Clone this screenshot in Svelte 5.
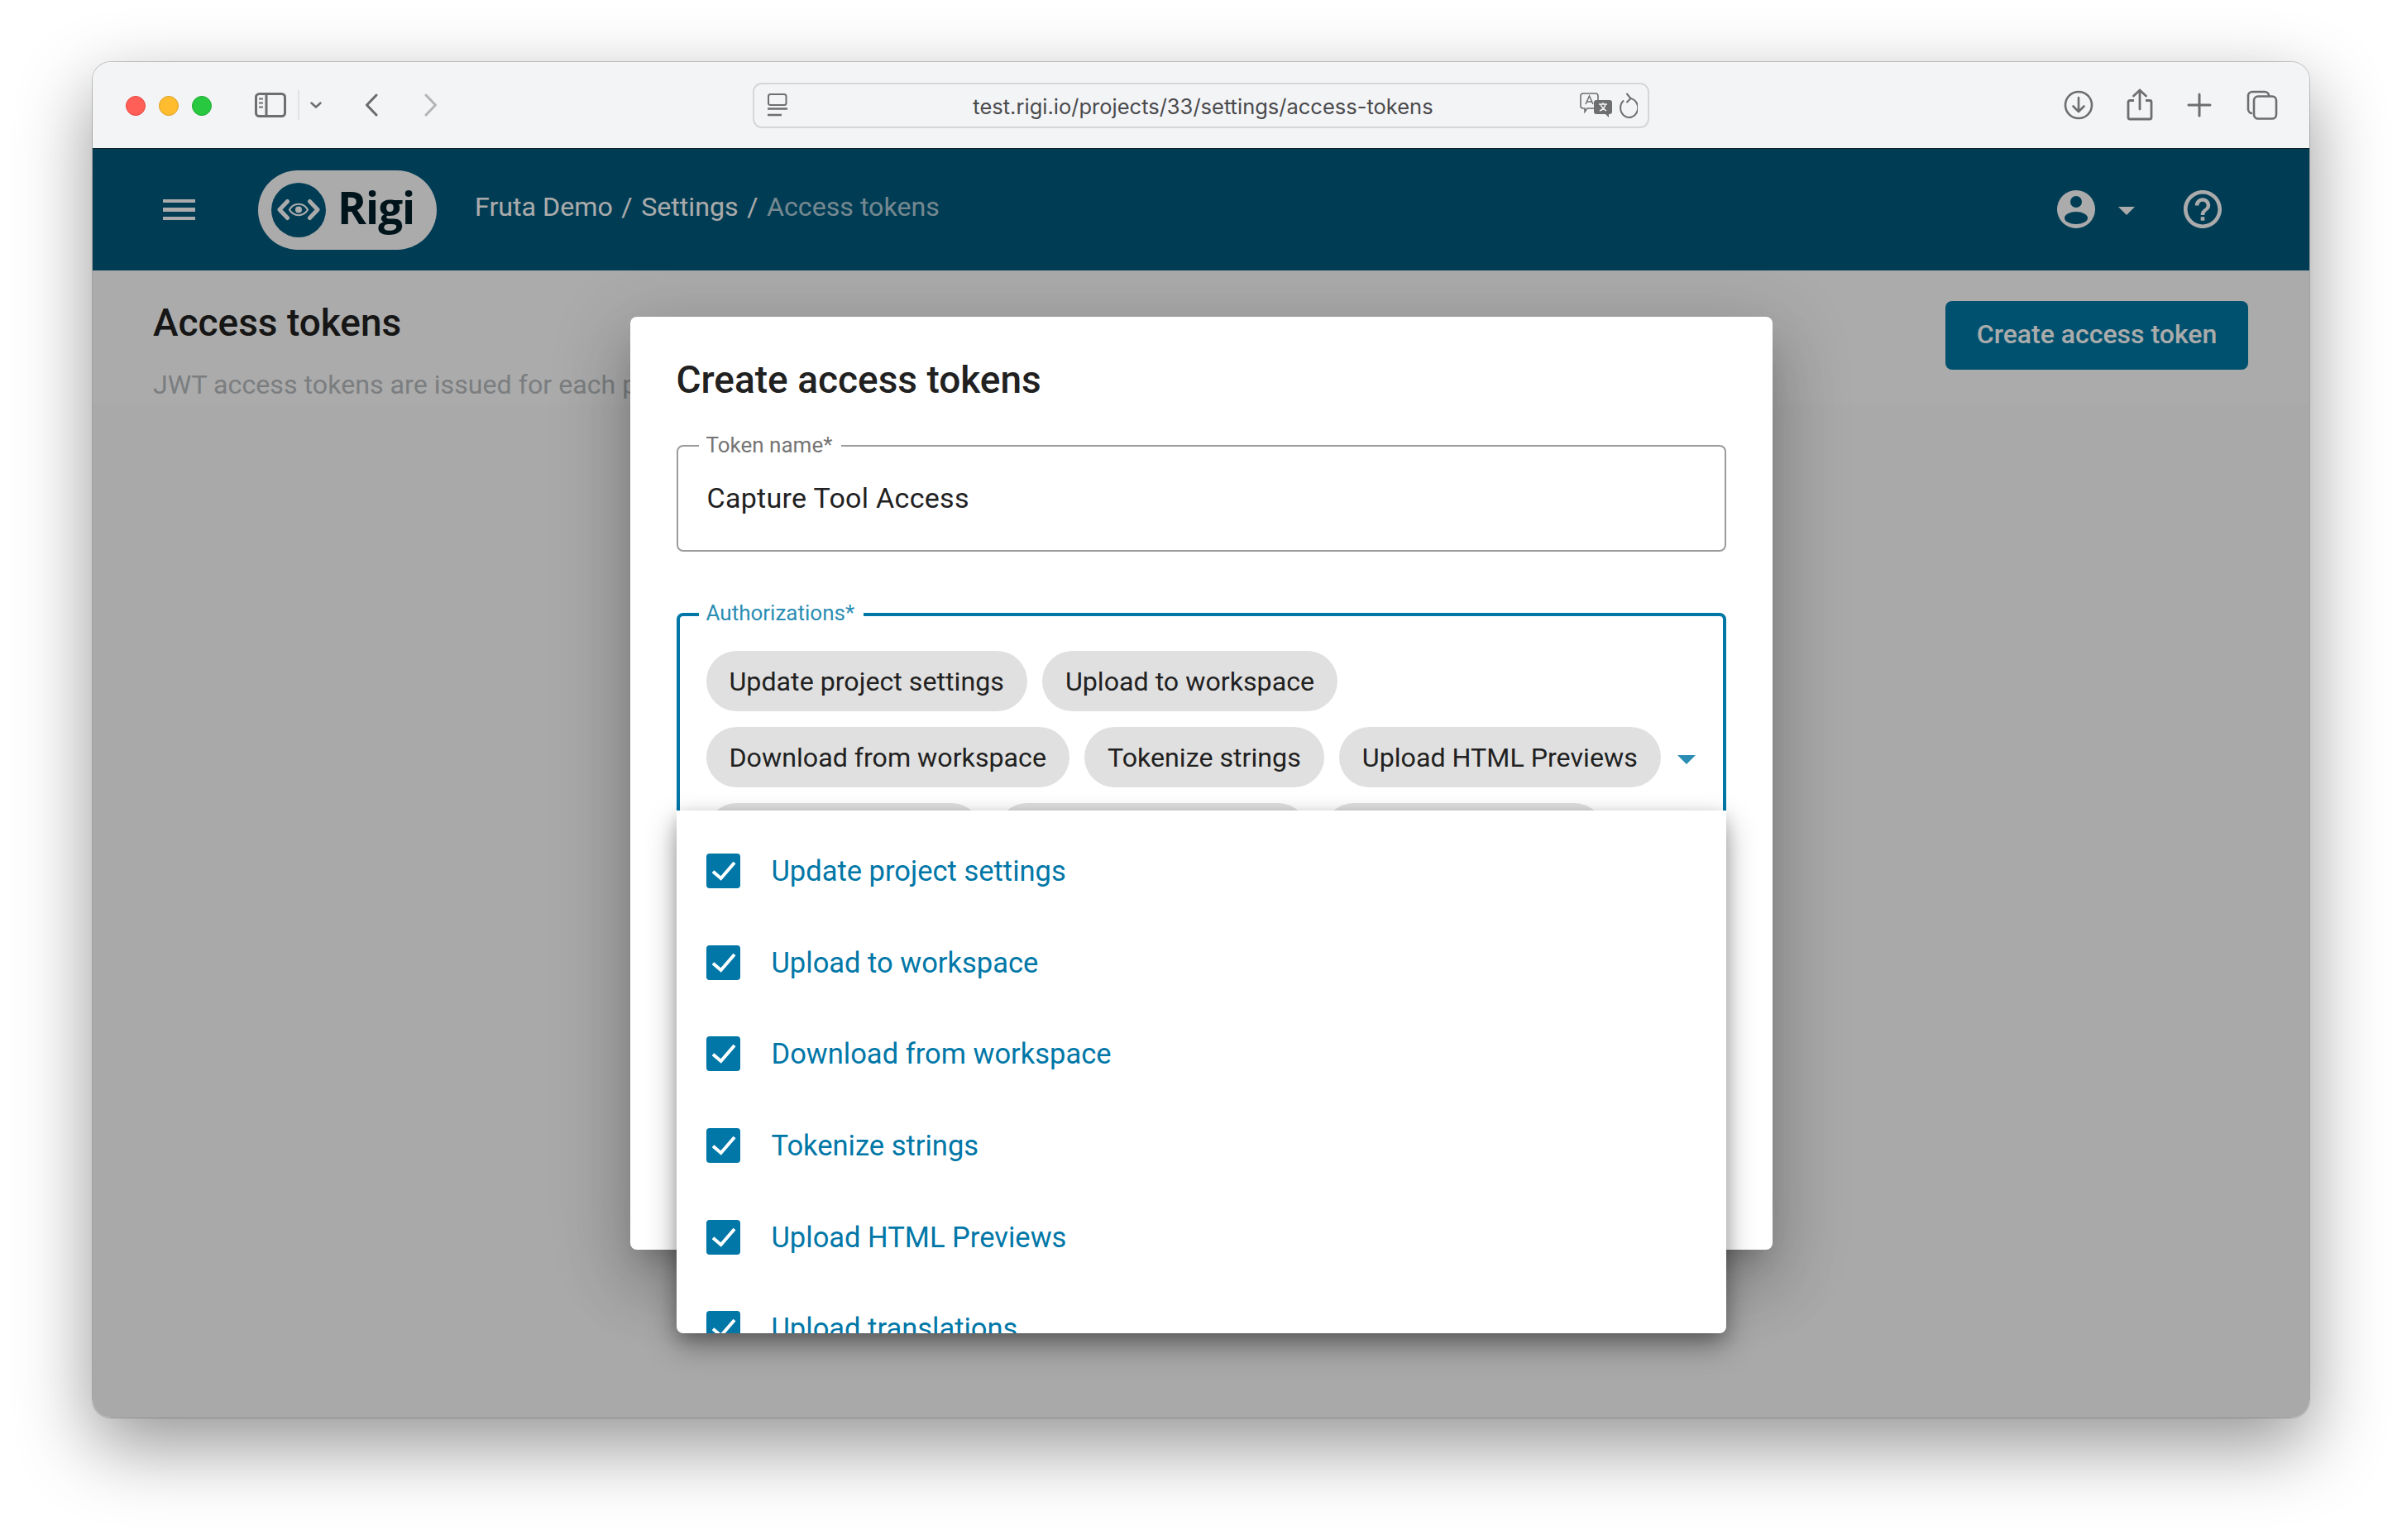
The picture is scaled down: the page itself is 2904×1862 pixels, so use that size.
<script>
  const chips = [
    'Update project settings',
    'Upload to workspace',
    'Download from workspace',
    'Tokenize strings',
    'Upload HTML Previews',
    'Upload translations',
    'Download translations',
    'Upload screenshots'
  ];

  const options = chips.slice(0, 6);
</script>

<div class="page">
  <div class="window">
    <div class="titlebar">
      <div class="bar-left">
        <span class="dot red"></span>
        <span class="dot yellow"></span>
        <span class="dot green"></span>
        <svg class="side" width="38" height="30" viewBox="0 0 38 30" fill="none" stroke="#6e6e70">
          <rect x="1.5" y="1.5" width="35" height="27" rx="4" stroke-width="3" />
          <path d="M14 2v26" stroke-width="3" />
          <path d="M5 7.5h5M5 12.5h5M5 17.5h5" stroke-width="2" />
        </svg>
        <span class="sep"></span>
        <svg class="drop" width="14" height="8" viewBox="0 0 14 8" fill="none" stroke="#6e6e70" stroke-width="2.5">
          <path d="M1.5 1.5 7 6.5l5.5-5" stroke-linecap="round" stroke-linejoin="round" />
        </svg>
        <svg class="back" width="16" height="28" viewBox="0 0 16 28" fill="none" stroke="#6a6a6c" stroke-width="3">
          <path d="M14 2 2.5 14 14 26" stroke-linecap="round" stroke-linejoin="round" />
        </svg>
        <svg class="forward" width="16" height="28" viewBox="0 0 16 28" fill="none" stroke="#b4b4b6" stroke-width="3">
          <path d="M2 2l11.5 12L2 26" stroke-linecap="round" stroke-linejoin="round" />
        </svg>
      </div>

      <div class="url">
        <svg width="24" height="28" viewBox="0 0 24 28" fill="none" stroke="#6e6e70">
          <rect x="1" y="1" width="21.5" height="13" rx="2.5" stroke-width="2" />
          <path d="M0 18.5h24" stroke-width="2.4" />
          <path d="M0 26h17" stroke-width="2.4" />
        </svg>
        <span class="url-text">test.rigi.io/projects/33/settings/access-tokens</span>
        <svg width="40" height="30" viewBox="0 0 40 30" fill="none">
          <path d="M4 1h15a3 3 0 0 1 3 3v12a3 3 0 0 1-3 3H9l-3 4v-4H4a3 3 0 0 1-3-3V4a3 3 0 0 1 3-3z" stroke="#6e6e70" stroke-width="1.6" fill="#f3f4f6" />
          <path d="M7 14l4.5-10L16 14M8.5 11h6" stroke="#6e6e70" stroke-width="1.5" />
          <path d="M20 9h16a3 3 0 0 1 3 3v11a3 3 0 0 1-3 3h-1v4l-4-4H20a3 3 0 0 1-3-3V12a3 3 0 0 1 3-3z" fill="#6e6e70" />
          <path d="M23 14h10M28 12v2M31 14c-1 4-4 7-7 8M25 14c1 3 4 6 7 8" stroke="#f3f4f6" stroke-width="1.5" />
        </svg>
        <svg class="reload" width="24" height="32" viewBox="0 0 24 32" fill="none" stroke="#6e6e70" stroke-width="2">
          <path d="M15 8a10.5 11.500 0 1 1-8 2.500" />
          <path d="M10.500 2 15.500 8l-5 5" />
        </svg>
      </div>

      <div class="bar-right">
        <svg width="40" height="40" viewBox="0 0 40 40" fill="none" stroke="#6e6e70" stroke-width="2.6">
          <circle cx="20" cy="20" r="16" />
          <path d="M20 11v17M13.5 21.5 20 28l6.5-6.5" stroke-linecap="round" stroke-linejoin="round" />
        </svg>
        <svg width="40" height="40" viewBox="0 0 40 40" fill="none" stroke="#6e6e70" stroke-width="2.8">
          <path d="M13 14.500H8a2 2 0 0 0-2 2V35a2 2 0 0 0 2 2h24a2 2 0 0 0 2-2V16.500a2 2 0 0 0-2-2h-5" />
          <path d="M20 25V2M12.500 9 20 2l7.500 7" stroke-linecap="round" stroke-linejoin="round" />
        </svg>
        <svg width="40" height="40" viewBox="0 0 40 40" fill="none" stroke="#6e6e70" stroke-width="3">
          <path d="M18 7v26M5 20h26" stroke-linecap="round" />
        </svg>
        <svg width="40" height="40" viewBox="0 0 40 40" fill="none" stroke="#6e6e70" stroke-width="2.6">
          <path d="M8 30a5 5 0 0 1-5-5V9a5 5 0 0 1 5-5h15a5 5 0 0 1 5 5" />
          <rect x="10" y="9.500" width="27" height="27" rx="5" />
        </svg>
      </div>
    </div>

    <div class="app">
      <header class="topbar">
        <div class="burger"><span></span><span></span><span></span></div>

        <div class="logo">
          <svg width="66" height="66" viewBox="0 0 66 66">
            <circle cx="33" cy="33" r="33" fill="#005b7f" />
            <g fill="none" stroke="#fff" stroke-width="5">
              <path d="M19.500 22.500 10 32.500 19.500 42.500M46.500 22.500 56 32.500 46.500 42.500" stroke-linecap="round" stroke-linejoin="round" />
              <path d="M22 32.500c5-9 17-9 22 0-5 9-17 9-22 0z" stroke-width="2.200" />
            </g>
            <circle cx="33" cy="32.500" r="4" fill="#fff" />
          </svg>
          <span class="logo-text">Rigi</span>
        </div>

        <nav class="crumbs">
          <span>Fruta Demo</span>
          <span class="slash">/</span>
          <span>Settings</span>
          <span class="slash">/</span>
          <span class="current">Access tokens</span>
        </nav>

        <div class="user">
          <svg width="46" height="46" viewBox="0 0 46 46">
            <circle cx="23" cy="23" r="23" fill="#fff" />
            <circle cx="23" cy="14" r="7" fill="#005b7f" />
            <ellipse cx="23" cy="33.500" rx="14" ry="7.500" fill="#005b7f" />
          </svg>
          <span class="caret"></span>
          <svg class="help" width="46" height="46" viewBox="2 2 20 20" fill="#fff">
            <path d="M11 18h2v-2h-2v2zm1-16C6.480 2 2 6.480 2 12s4.480 10 10 10 10-4.480 10-10S17.520 2 12 2zm0 18c-4.410 0-8-3.590-8-8s3.590-8 8-8 8 3.590 8 8-3.590 8-8 8zm0-14c-2.210 0-4 1.790-4 4h2c0-1.100.9-2 2-2s2 .9 2 2c0 2-3 1.750-3 5h2c0-2.250 3-2.500 3-5 0-2.210-1.790-4-4-4z" />
          </svg>
        </div>
      </header>

      <section class="head">
        <div>
          <h1>Access tokens</h1>
          <p>JWT access tokens are issued for each project and authorize the tools that call the API.</p>
        </div>
        <button class="create">Create access token</button>
      </section>

      <div class="overlay">
        <div class="modal">
          <h2>Create access tokens</h2>

          <div class="field">
            <span class="label">Token name*</span>
            <span class="value">Capture Tool Access</span>
          </div>

          <div class="field focused">
            <span class="label">Authorizations*</span>
            <div class="chips">
              {#each chips as chip}
                <span class="chip">{chip}</span>
              {/each}
            </div>
            <span class="arrow"></span>
          </div>

          <div class="menu">
            <ul>
              {#each options as option}
                <li>
                  <svg width="41" height="42" viewBox="0 0 41 42">
                    <rect width="41" height="42" rx="4" fill="#0077a7" />
                    <path d="M8 21.700 17.600 30 34 11" fill="none" stroke="#fff" stroke-width="4" />
                  </svg>
                  <span>{option}</span>
                </li>
              {/each}
            </ul>
          </div>
        </div>
      </div>
    </div>
  </div>
</div>

<style>
  :global(body) {
    margin: 0;
    background: #fff;
  }

  .page {
    box-sizing: border-box;
    width: 2904px;
    height: 1862px;
    padding: 75px 0 0 112px;
    overflow: hidden;
    font-family: Roboto, sans-serif;
  }

  .window {
    width: 2680px;
    height: 1639px;
    display: flex;
    flex-direction: column;
    border-radius: 22px;
    overflow: hidden;
    box-shadow: 0 0 0 1px rgba(0, 0, 0, 0.2), 0 34px 90px rgba(0, 0, 0, 0.42);
  }

  .titlebar {
    box-sizing: border-box;
    height: 105px;
    flex: none;
    display: flex;
    align-items: center;
    background: #f3f4f6;
    border-bottom: 1px solid #10202a;
  }

  .bar-left {
    width: 798px;
    flex: none;
    display: flex;
    align-items: center;
    padding-left: 40px;
    box-sizing: border-box;
  }

  .dot {
    width: 24px;
    height: 24px;
    border-radius: 50%;
    margin-right: 16px;
    margin-top: 1px;
    box-sizing: border-box;
  }

  .red {
    background: #ff5f57;
    border: 1px solid #e5453d;
  }

  .yellow {
    background: #febc2e;
    border: 1px solid #dea123;
  }

  .green {
    background: #28c840;
    border: 1px solid #1eaa32;
  }

  .side {
    margin-left: 36px;
  }

  .sep {
    width: 2px;
    height: 36px;
    margin-left: 14px;
    background: #e3e3e5;
  }

  .drop {
    margin-left: 13px;
  }

  .back {
    margin-left: 52px;
  }

  .forward {
    margin-left: 56px;
  }

  .url {
    box-sizing: border-box;
    width: 1084px;
    height: 55px;
    flex: none;
    display: flex;
    align-items: center;
    padding: 0 12px 0 16px;
    border: 2px solid #d6d6d8;
    border-radius: 11px;
  }

  .url-text {
    flex: 1;
    text-align: center;
    padding-left: 47px;
    margin-top: 2px;
    font-family: Inter, sans-serif;
    font-size: 25.500px;
    color: #4a4a4c;
  }

  .reload {
    margin-left: 6px;
  }

  .bar-right {
    flex: 1;
    display: flex;
    justify-content: flex-end;
    gap: 34px;
    padding-right: 37px;
  }

  .app {
    position: relative;
    flex: 1;
    display: flex;
    flex-direction: column;
    background: #fcfcfc;
  }

  .topbar {
    box-sizing: border-box;
    height: 147px;
    flex: none;
    display: flex;
    align-items: center;
    padding: 0 106px 0 85px;
    background: #005b7f;
    color: #fff;
  }

  .burger {
    width: 39px;
    display: flex;
    flex-direction: column;
    gap: 6px;
  }

  .burger span {
    height: 4.500px;
    background: #fff;
  }

  .logo {
    width: 216px;
    height: 96px;
    box-sizing: border-box;
    margin-left: 76px;
    padding-left: 16px;
    display: flex;
    align-items: center;
    gap: 14px;
    background: #fff;
    border-radius: 48px;
  }

  .logo-text {
    margin-top: -5px;
    font-family: "Open Sans", sans-serif;
    font-weight: 700;
    font-size: 53px;
    line-height: 60px;
    letter-spacing: -1px;
    color: #001e2b;
  }

  .crumbs {
    margin-left: 46px;
    display: flex;
    align-items: center;
    gap: 10.500px;
    font-size: 32.200px;
    line-height: 40px;
    margin-top: -7px;
  }

  .current {
    color: rgba(255, 255, 255, 0.7);
  }

  .user {
    margin-left: auto;
    margin-top: -2px;
    display: flex;
    align-items: center;
  }

  .caret {
    width: 0;
    height: 0;
    margin: 4px 0 0 28px;
    border-left: 10px solid transparent;
    border-right: 10px solid transparent;
    border-top: 10px solid #fff;
  }

  .help {
    margin-left: 59px;
  }

  .head {
    box-sizing: border-box;
    height: 162px;
    flex: none;
    display: flex;
    justify-content: space-between;
    align-items: flex-start;
    padding: 37px 74px 0 73px;
    background: #fff;
  }

  h1 {
    margin: 0;
    font-size: 46px;
    line-height: 52px;
    font-weight: 500;
    color: #212121;
  }

  .head p {
    margin: 27px 0 0;
    font-size: 32.200px;
    line-height: 44px;
    color: #b8bcbf;
    white-space: nowrap;
  }

  .create {
    width: 366px;
    height: 83px;
    flex: none;
    padding: 0 0 3px;
    border: 0;
    border-radius: 8px;
    background: #007aa6;
    color: #fff;
    font-family: Roboto, sans-serif;
    font-size: 32px;
    font-weight: 500;
  }

  .overlay {
    position: absolute;
    inset: 0;
    display: flex;
    align-items: center;
    justify-content: center;
    background: rgba(0, 0, 0, 0.33);
  }

  .modal {
    position: relative;
    box-sizing: border-box;
    width: 1381px;
    height: 1128px;
    padding: 50px 56px 0;
    border-radius: 8px;
    background: #fff;
    box-shadow: 0 22px 30px -14px rgba(0, 0, 0, 0.2), 0 48px 76px 6px rgba(0, 0, 0, 0.14), 0 18px 92px 16px rgba(0, 0, 0, 0.12);
  }

  h2 {
    margin: 0 0 53px;
    font-size: 46px;
    line-height: 52px;
    font-weight: 500;
    color: #212121;
  }

  .field {
    position: relative;
    box-sizing: border-box;
    height: 129px;
    padding: 0 35px;
    display: flex;
    align-items: center;
    border: 2px solid #9b9b9b;
    border-radius: 8px;
  }

  .value {
    font-size: 34px;
    line-height: 42px;
    letter-spacing: 0.3px;
    margin-top: -2px;
    color: #212121;
  }

  .label {
    position: absolute;
    top: -17px;
    left: 25px;
    padding: 0 11px 0 9px;
    background: #fff;
    font-size: 26px;
    line-height: 30px;
    color: #757575;
  }

  .focused {
    height: auto;
    margin-top: 74px;
    padding: 42px 70px 42px 32px;
    align-items: flex-start;
    border: 4px solid #0077a7;
  }

  .focused .label {
    top: -19px;
    left: 23px;
    color: #2b8db3;
  }

  .chips {
    display: flex;
    flex-wrap: wrap;
    gap: 19px 18px;
  }

  .chip {
    box-sizing: border-box;
    height: 73px;
    padding: 0 28px;
    display: flex;
    align-items: center;
    border-radius: 37px;
    background: #e0e0e0;
    color: #212121;
    font-size: 32.200px;
    white-space: nowrap;
  }

  .arrow {
    position: absolute;
    top: 168px;
    right: 33px;
    width: 0;
    height: 0;
    border-left: 11px solid transparent;
    border-right: 11px solid transparent;
    border-top: 11px solid #2b8db3;
  }

  .menu {
    position: absolute;
    top: 597px;
    left: 56px;
    width: 1269px;
    height: 632px;
    overflow: hidden;
    border-radius: 0 0 8px 8px;
    background: #fff;
    box-shadow: 0 16px 36px rgba(0, 0, 0, 0.34), 0 6px 20px -2px rgba(0, 0, 0, 0.22);
  }

  ul {
    margin: 0;
    padding: 18px 0 0 36px;
    list-style: none;
  }

  li {
    height: 110.600px;
    display: flex;
    align-items: center;
    gap: 38px;
    color: #0077a7;
    font-size: 34.500px;
  }
</style>
